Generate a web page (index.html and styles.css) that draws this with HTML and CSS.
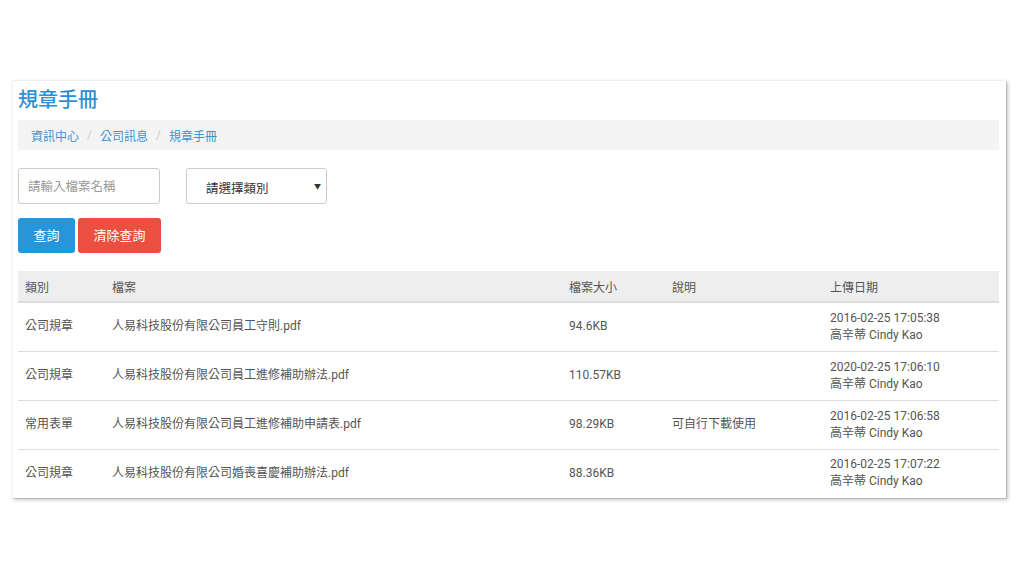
FILE: index.html
```html
<!DOCTYPE html>
<html lang="zh-Hant">
<head>
<meta charset="utf-8">
<title>規章手冊</title>
<link rel="stylesheet" href="styles.css">
</head>
<body>
<div class="page">
  <div class="card">
    <h1 class="title">規章手冊</h1>
    <ol class="breadcrumb">
      <li><a href="#">資訊中心</a></li>
      <li class="sep">/</li>
      <li><a href="#">公司訊息</a></li>
      <li class="sep">/</li>
      <li><a href="#">規章手冊</a></li>
    </ol>
    <div class="filters">
      <input class="field" type="text" placeholder="請輸入檔案名稱">
      <div class="select">
        <span class="select-text">請選擇類別</span>
        <span class="caret">▼</span>
      </div>
    </div>
    <div class="actions">
      <button class="btn btn-blue">查詢</button>
      <button class="btn btn-red">清除查詢</button>
    </div>
    <table class="table">
      <colgroup>
        <col class="c1"><col class="c2"><col class="c3"><col class="c4"><col class="c5">
      </colgroup>
      <thead>
        <tr><th>類別</th><th>檔案</th><th>檔案大小</th><th>說明</th><th>上傳日期</th></tr>
      </thead>
      <tbody>
        <tr><td>公司規章</td><td>人易科技股份有限公司員工守則.pdf</td><td>94.6KB</td><td></td><td>2016-02-25 17:05:38<br>高辛蒂 Cindy Kao</td></tr>
        <tr><td>公司規章</td><td>人易科技股份有限公司員工進修補助辦法.pdf</td><td>110.57KB</td><td></td><td>2020-02-25 17:06:10<br>高辛蒂 Cindy Kao</td></tr>
        <tr><td>常用表單</td><td>人易科技股份有限公司員工進修補助申請表.pdf</td><td>98.29KB</td><td>可自行下載使用</td><td>2016-02-25 17:06:58<br>高辛蒂 Cindy Kao</td></tr>
        <tr><td>公司規章</td><td>人易科技股份有限公司婚喪喜慶補助辦法.pdf</td><td>88.36KB</td><td></td><td>2016-02-25 17:07:22<br>高辛蒂 Cindy Kao</td></tr>
      </tbody>
    </table>
  </div>
</div>
</body>
</html>
```
FILE: styles.css
```css
* { box-sizing: border-box; }
html, body { margin: 0; padding: 0; background: #fff; }
body {
  font-family: Roboto, "Noto Sans CJK TC", sans-serif;
  font-size: 12px;
  color: #555;
  min-height: 576px;
}
.page {
  padding: 80px 18px 60px 12px;
}
.card {
  width: 994px;
  background: #fff;
  border-top: 1px solid #f0f0f0;
  border-left: 1px solid #f3f3f3;
  box-shadow: 1px 1px 1px rgba(0, 0, 0, 0.12), 2px 2px 4px rgba(0, 0, 0, 0.22);
  padding: 6px 6px 1px 5px;
}
.title {
  margin: 0;
  font-size: 20px;
  font-weight: 500;
  line-height: 26px;
  color: #2a8fd6;
  height: 33px;
}
.breadcrumb {
  list-style: none;
  margin: 0;
  padding: 0 13px;
  height: 30px;
  background: #f4f4f4;
  display: flex;
  align-items: center;
  gap: 8px;
  width: 981px;
}
.breadcrumb a {
  color: #3a93d4;
  text-decoration: none;
  font-size: 12px;
}
.breadcrumb .sep { color: #ccc; }
.filters {
  display: flex;
  gap: 26px;
  margin-top: 18px;
}
.field {
  width: 142px;
  height: 36px;
  border: 1px solid #ccc;
  border-radius: 3px;
  padding: 0 9px;
  font-family: inherit;
  font-size: 12.5px;
  color: #555;
  outline: none;
}
.field::placeholder { color: #999; }
.select {
  width: 141px;
  height: 36px;
  border: 1px solid #ccc;
  border-radius: 3px;
  display: flex;
  align-items: center;
  justify-content: space-between;
  padding: 3px 5px 0 19px;
  font-size: 12.5px;
  color: #333;
}
.caret { font-size: 7px; color: #333; margin-top: -4px; }
.actions {
  display: flex;
  gap: 3px;
  margin-top: 14px;
}
.btn {
  height: 35px;
  border: none;
  border-radius: 3px;
  color: #fff;
  font-family: inherit;
  font-size: 13px;
  padding: 0 0 3px 0;
  white-space: nowrap;
  text-align: center;
}
.btn-blue { background: #2596dc; width: 57px; }
.btn-red { background: #ea4f40; width: 83px; }
.table {
  margin-top: 18px;
  width: 981px;
  border-collapse: collapse;
  table-layout: fixed;
}
.c1 { width: 87px; }
.c2 { width: 457px; }
.c3 { width: 103px; }
.c4 { width: 158px; }
.c5 { width: 176px; }
.table th {
  background: #eee;
  text-align: left;
  font-weight: normal;
  height: 31px;
  padding: 0 7px;
  border-bottom: 2px solid #ddd;
  color: #555;
}
.table td {
  height: 49px;
  padding: 0 7px;
  border-bottom: 1px solid #ddd;
  line-height: 17px;
  vertical-align: middle;
}
.table tbody tr:last-child td { border-bottom: none; height: 48px; }
```
